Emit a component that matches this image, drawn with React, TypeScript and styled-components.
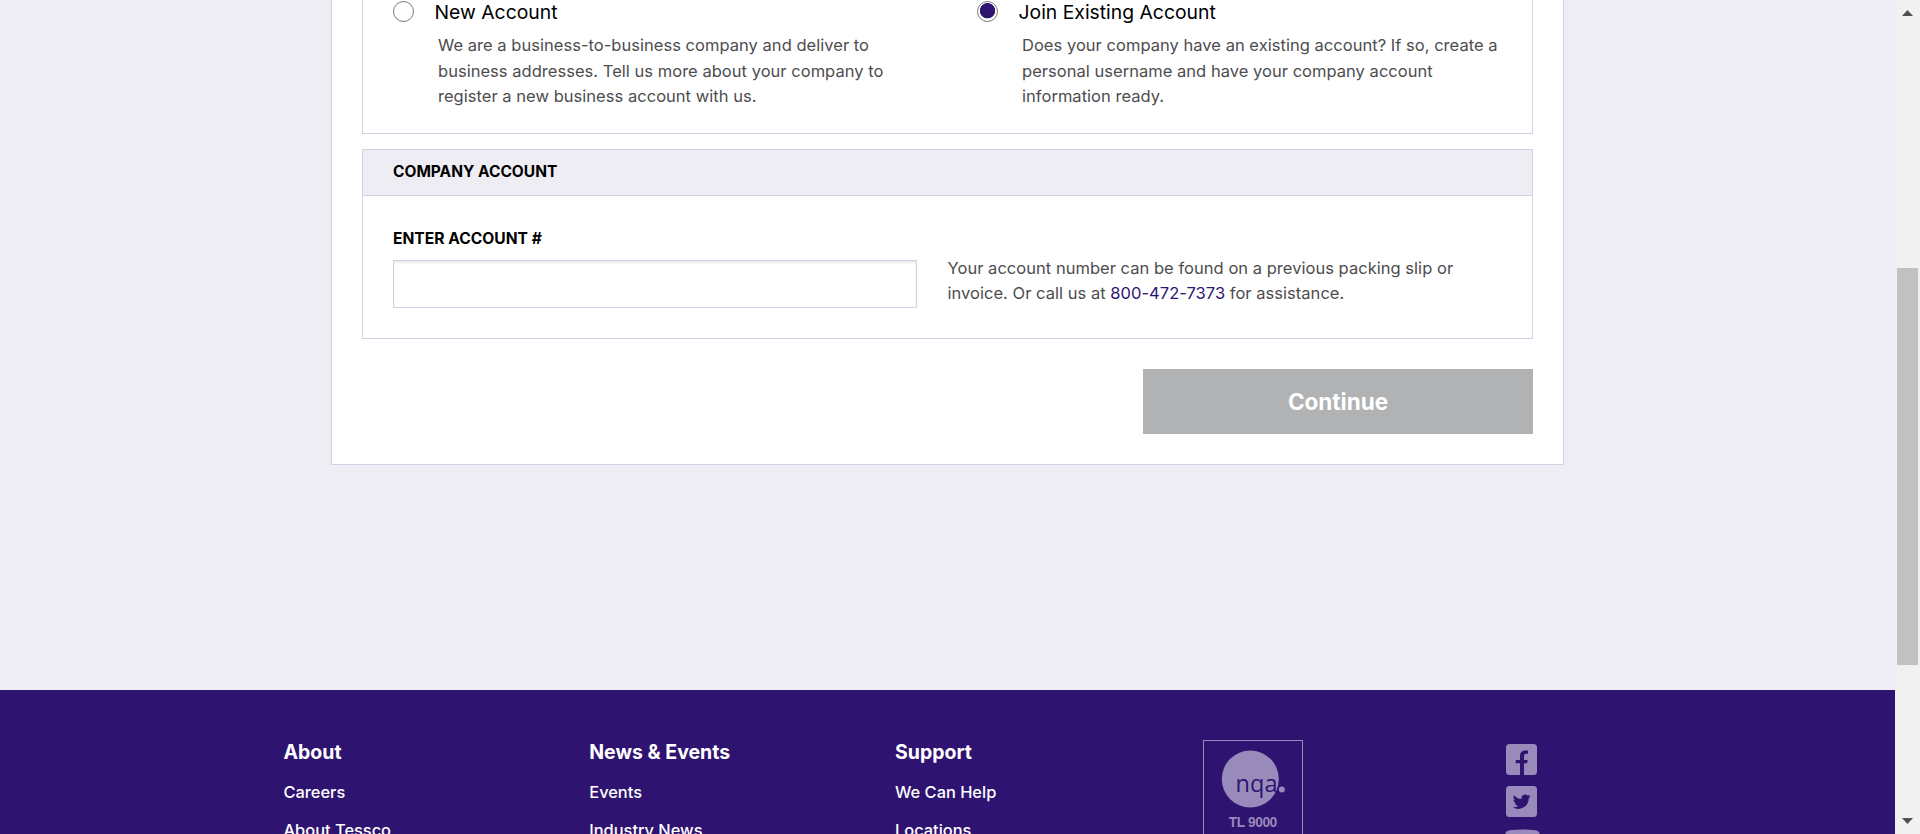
import React from 'react';
import styled, { createGlobalStyle } from 'styled-components';

const color = {
  purple: '#2e1371',
  page: '#efedf4',
  line: '#d3cfe5',
  body: '#4d4d4f',
  lilac: '#988aba',
};

const GlobalStyle = createGlobalStyle`
  * { box-sizing: border-box; }
  body {
    margin: 0;
    overflow: hidden;
    font-family: Inter, "Liberation Sans", sans-serif;
    color: #000;
  }
  h2, h3, p, ul { margin: 0; padding: 0; }
  a { color: ${color.purple}; text-decoration: none; }
`;

const Viewport = styled.div`
  display: flex;
  height: 834px;
  overflow: hidden;
`;

const Page = styled.div`
  flex: 1;
  display: flex;
  flex-direction: column;
  background: ${color.page};
  overflow: hidden;
`;

const Main = styled.main`
  flex: 0 0 690px;
`;

const Card = styled.form`
  width: 1233px;
  height: 465px;
  margin: 0 auto;
  padding: 0 30px 30px;
  display: flex;
  flex-direction: column;
  background: #fff;
  border: 1px solid ${color.line};
  border-top: 0;
`;

const OptionsBox = styled.div`
  flex: 0 0 134px;
  display: grid;
  grid-template-columns: 584px 1fr;
  border: 1px solid ${color.line};
  border-top: 0;
`;

const Option = styled.div`
  padding: 0 29px 0 30px;
`;

const OptionLabel = styled.label`
  display: flex;
  align-items: center;
  gap: 20.5px;
  height: 24px;
  font-size: 19.35px;
  line-height: 24px;
`;

const Radio = styled.input`
  appearance: none;
  flex: none;
  width: 21px;
  height: 21px;
  margin: 0 0 1px;
  border: 1px solid #767676;
  border-radius: 50%;
  background: #fff;

  &:checked {
    background: radial-gradient(circle at 50% 46%, ${color.purple} 7.3px, #fff 8px);
  }
`;

const Copy = styled.p`
  font-size: 16.5px;
  line-height: 25.5px;
  letter-spacing: 0.03px;
  color: ${color.body};
`;

const OptionCopy = styled(Copy)`
  padding-left: 45px;
  margin-top: 9px;
`;

const Panel = styled.section`
  flex: 0 0 190px;
  margin-top: 15px;
  border: 1px solid ${color.line};
`;

const PanelHeading = styled.h2`
  height: 46px;
  padding: 10px 30px 0;
  background: ${color.page};
  border-bottom: 1px solid ${color.line};
  font-size: 15.5px;
  line-height: 24px;
  font-weight: 700;
`;

const PanelBody = styled.div`
  display: flex;
  gap: 30.5px;
  padding: 31px 29px 29px 30px;
`;

const Field = styled.label`
  display: flex;
  flex-direction: column;
  gap: 9px;
  width: 524px;
  font-size: 15.6px;
  line-height: 24px;
  font-weight: 700;
`;

const TextInput = styled.input`
  height: 48px;
  padding: 0 15px;
  border: 1px solid ${color.line};
  border-radius: 0;
  background: #fff;
  box-shadow: inset 0 2px 2px rgba(0, 0, 0, 0.08);
  font: 400 16.5px Inter, sans-serif;
`;

const Help = styled(Copy)`
  flex: 1;
  margin-top: 29px;
  line-height: 25px;
`;

const ContinueButton = styled.button`
  align-self: flex-end;
  flex: 0 0 65px;
  width: 390px;
  margin-top: 30px;
  padding: 0 0 1px;
  border: 0;
  background: #b1b2b4;
  color: #fff;
  font: 700 22.5px Inter, sans-serif;
`;

const Footer = styled.footer`
  flex: 1;
  display: flex;
  padding: 50px 0 0 283.5px;
  background: ${color.purple};
  color: #fff;
  overflow: hidden;
`;

const LinkColumn = styled.nav`
  flex: 0 0 305.75px;
`;

const ColumnTitle = styled.h3`
  font-size: 19.5px;
  line-height: 24px;
  font-weight: 700;
`;

const Links = styled.ul`
  display: grid;
  gap: 12px;
  margin-top: 15px;
  list-style: none;
  font-size: 16.4px;
  line-height: 26px;
  font-weight: 500;

  a { color: #fff; }
`;

const Certificate = styled.div`
  flex: none;
  width: 100px;
  height: 120px;
  margin-left: 2.25px;
  border: 1px solid ${color.lilac};

  svg { display: block; }
`;

const Social = styled.div`
  display: flex;
  flex-direction: column;
  gap: 11px;
  margin: 4px 0 0 203px;

  svg { display: block; flex: none; overflow: visible; }
`;

const Scrollbar = styled.div`
  flex: 0 0 25px;
  display: flex;
  flex-direction: column;
  padding: 0 2px;
  background: #f1f1f1;
`;

const ScrollArrow = styled.svg`
  display: block;
  flex: none;
  width: 21px;
  height: 25px;
  fill: #505050;
`;

const ScrollTrack = styled.div`
  flex: 1;
  padding-top: 243px;
`;

const ScrollThumb = styled.div`
  height: 397px;
  background: #c1c1c1;
`;

const columns = [
  { title: 'About', links: ['Careers', 'About Tessco'] },
  { title: 'News & Events', links: ['Events', 'Industry News'] },
  { title: 'Support', links: ['We Can Help', 'Locations'] },
];

const FacebookIcon = () => (
  <svg width="31" height="31" viewBox="0 0 31 31">
    <rect width="31" height="31" rx="3.5" fill={color.lilac} />
    <path
      fill={color.purple}
      d="M14 31V19.2H9.7V15.9H14V12.5C14 8.6 16.2 6.6 19.5 6.6H22V9.8H20.2C18.7 9.8 18 10.6 18 12.1V15.9H21.6L21.2 19.2H18V31Z"
    />
  </svg>
);

const TwitterIcon = () => (
  <svg width="31" height="31" viewBox="0 0 31 31">
    <rect width="31" height="31" rx="3.5" fill={color.lilac} />
    <path
      fill={color.purple}
      transform="translate(6.8 6.8) scale(.74)"
      d="M23.953 4.57a10 10 0 01-2.825.775 4.958 4.958 0 002.163-2.723c-.951.555-2.005.959-3.127 1.184a4.92 4.92 0 00-8.384 4.482C7.69 8.095 4.067 6.13 1.64 3.162a4.822 4.822 0 00-.666 2.475c0 1.71.87 3.213 2.188 4.096a4.904 4.904 0 01-2.228-.616v.06a4.923 4.923 0 003.946 4.827 4.996 4.996 0 01-2.212.085 4.936 4.936 0 004.604 3.417 9.867 9.867 0 01-6.102 2.105c-.39 0-.779-.023-1.17-.067a13.995 13.995 0 007.557 2.209c9.053 0 13.998-7.496 13.998-13.985 0-.21 0-.42-.015-.63A9.935 9.935 0 0024 4.59z"
    />
  </svg>
);

const YoutubeIcon = () => (
  <svg width="31" height="25" viewBox="0 0 31 25">
    <path
      fill={color.lilac}
      d="M3.5 2.2Q16.5 .6 29.5 2.2Q33.4 2.6 33.8 6.5Q34.4 13 33.8 19.5Q33.4 23.4 29.5 23.8Q16.5 25 3.5 23.8Q-.4 23.4 -.8 19.5Q-1.4 13 -.8 6.5Q-.4 2.6 3.5 2.2Z"
    />
    <path fill={color.purple} d="M13 8L22 13L13 18Z" />
  </svg>
);

export default function App() {
  return (
    <Viewport>
      <GlobalStyle />
      <Page>
        <Main>
          <Card>
            <OptionsBox>
              <Option>
                <OptionLabel>
                  <Radio type="radio" name="account" />
                  New Account
                </OptionLabel>
                <OptionCopy>
                  We are a business-to-business company and deliver to business addresses. Tell us
                  more about your company to register a new business account with us.
                </OptionCopy>
              </Option>
              <Option>
                <OptionLabel>
                  <Radio type="radio" name="account" defaultChecked />
                  Join Existing Account
                </OptionLabel>
                <OptionCopy>
                  Does your company have an existing account? If so, create a personal username and
                  have your company account information ready.
                </OptionCopy>
              </Option>
            </OptionsBox>
            <Panel>
              <PanelHeading>COMPANY ACCOUNT</PanelHeading>
              <PanelBody>
                <Field>
                  ENTER ACCOUNT #
                  <TextInput type="text" />
                </Field>
                <Help>
                  Your account number can be found on a previous packing slip or invoice. Or call us
                  at <a href="tel:800-472-7373">800-472-7373</a> for assistance.
                </Help>
              </PanelBody>
            </Panel>
            <ContinueButton type="button">Continue</ContinueButton>
          </Card>
        </Main>
        <Footer>
          {columns.map((column) => (
            <LinkColumn key={column.title}>
              <ColumnTitle>{column.title}</ColumnTitle>
              <Links>
                {column.links.map((link) => (
                  <li key={link}>
                    <a href="#">{link}</a>
                  </li>
                ))}
              </Links>
            </LinkColumn>
          ))}
          <Certificate>
            <svg width="98" height="118" viewBox="1 1 98 118">
              <circle cx="47.3" cy="39" r="28.5" fill={color.lilac} />
              <circle cx="78.8" cy="49.5" r="3" fill={color.lilac} />
              <text x="32.5" y="52" textLength="42" fontFamily="'Open Sans', sans-serif" fontSize="23.5" fill={color.purple}>
                nqa
              </text>
              <text x="25.8" y="87" textLength="48.5" fontFamily="'Liberation Sans', sans-serif" fontWeight="700" fontSize="13.8" fill={color.lilac}>
                TL 9000
              </text>
            </svg>
          </Certificate>
          <Social>
            <FacebookIcon />
            <TwitterIcon />
            <YoutubeIcon />
          </Social>
        </Footer>
      </Page>
      <Scrollbar>
        <ScrollArrow viewBox="0 0 21 25">
          <path d="M5 16L10.5 10L16 16Z" />
        </ScrollArrow>
        <ScrollTrack>
          <ScrollThumb />
        </ScrollTrack>
        <ScrollArrow viewBox="0 0 21 25">
          <path d="M5 9L10.5 15L16 9Z" />
        </ScrollArrow>
      </Scrollbar>
    </Viewport>
  );
}
